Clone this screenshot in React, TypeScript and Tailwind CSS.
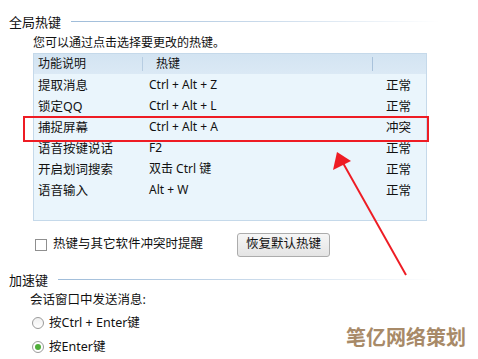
import React from "react";

const rows = [
  ["提取消息", "Ctrl + Alt + Z", "正常"],
  ["锁定QQ", "Ctrl + Alt + L", "正常"],
  ["捕捉屏幕", "Ctrl + Alt + A", "冲突"],
  ["语音按键说话", "F2", "正常"],
  ["开启划词搜索", "双击 Ctrl 键", "正常"],
  ["语音输入", "Alt + W", "正常"],
];

export default function App() {
  return (
    <div
      className="relative w-[478px] h-[359px] overflow-hidden bg-white text-[12px] leading-none text-[#111]"
      style={{ fontFamily: '"Noto Sans", "Noto Sans CJK SC", sans-serif' }}
    >
      {/* 全局热键 heading */}
      <div className="flex items-center pl-[9px] pt-[13px] h-[29px]">
        <span className="text-[13px] pt-[2px]">全局热键</span>
        <div className="ml-[10px] mr-[38px] h-px flex-1 bg-gradient-to-r from-[#9fbcd9] via-[#c8d9ea] to-[#ffffff]" />
      </div>
      <div className="pl-[33px] pt-[8px] h-[24px] text-[12px]">您可以通过点击选择要更改的热键。</div>

      {/* table */}
      <div className="ml-[33px] w-[394px] h-[168px] border border-[#c5d9ea] bg-[#eaf5fc]">
        <div className="flex h-[20px] items-center bg-gradient-to-b from-[#d3e4f2] to-[#dbe9f5]">
          <div className="w-[108px] pl-[4px]">功能说明</div>
          <div className="w-px h-[14px] bg-[#b7cde2]" />
          <div className="w-[229px] pl-[13px]">热键</div>
          <div className="w-px h-[14px] bg-[#a9c2db]" />
          <div className="flex-1" />
        </div>
        {rows.map((r) => (
          <div key={r[0]} className="flex h-[21px] items-center">
            <div className="w-[115px] pl-[4px] pt-[3px] text-[12.5px]">{r[0]}</div>
            <div className="w-[236px] text-[12px]">{r[1]}</div>
            <div className="flex-1 pl-[1px] pt-[3px] text-[12.5px]">{r[2]}</div>
          </div>
        ))}
      </div>

      {/* checkbox row */}
      <div className="flex items-center h-[40px] pt-[7px]">
        <div className="ml-[35px] w-[12px] h-[12px] border border-[#8f8f8f] bg-white" />
        <span className="ml-[6px] text-[12.5px]">热键与其它软件冲突时提醒</span>
        <div className="ml-[34px] flex items-center justify-center w-[93px] h-[24px] rounded-[3px] border border-[#acacac] bg-gradient-to-b from-[#f6f6f6] to-[#e4e4e4] text-[12.5px]">
          恢复默认热键
        </div>
      </div>

      {/* 加速键 heading */}
      <div className="flex items-center pl-[9px] pt-[7px] h-[29px]">
        <span className="text-[13px] pt-[2px]">加速键</span>
        <div className="ml-[10px] mr-[42px] h-px flex-1 bg-gradient-to-r from-[#9fbcd9] via-[#c8d9ea] to-[#ffffff]" />
      </div>
      <div className="pl-[30px] pt-[4px] h-[22px] text-[12.5px]">会话窗口中发送消息:</div>
      <div className="flex items-center pl-[32px] h-[22px]">
        <div className="w-[12px] h-[12px] rounded-full border border-[#9a9a9a] bg-gradient-to-b from-[#f0f0f0] to-[#ffffff]" />
        <span className="ml-[5px] text-[12.5px]">按Ctrl + Enter键</span>
      </div>
      <div className="flex items-center pl-[32px] h-[24px] pt-[2px]">
        <div className="flex items-center justify-center w-[12px] h-[12px] rounded-full border border-[#9a9a9a] bg-white">
          <div className="w-[6px] h-[6px] rounded-full bg-[#4fae3a]" />
        </div>
        <span className="ml-[5px] text-[12.5px]">按Enter键</span>
      </div>

      {/* red highlight rectangle */}
      <div className="absolute left-[23px] top-[116px] w-[406px] h-[26px] border-2 border-[#ee1c24]" />

      {/* red arrow */}
      <svg className="absolute left-0 top-0" width="478" height="359" viewBox="0 0 478 359">
        <line x1="406" y1="275" x2="343" y2="163" stroke="#ee1c24" strokeWidth="2" />
        <polygon points="337,152 333,170 351,161" fill="#ee1c24" />
      </svg>

      {/* watermark */}
      <div
        className="absolute left-[346px] top-[327px] text-[20px] font-bold text-[#a88a68]"
        style={{ fontFamily: '"Noto Sans CJK SC", sans-serif' }}
      >
        笔亿网络策划
      </div>
    </div>
  );
}
